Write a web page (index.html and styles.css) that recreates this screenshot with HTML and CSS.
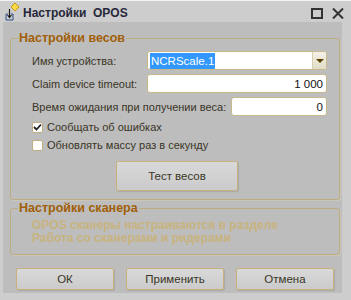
FILE: index.html
```html
<!DOCTYPE html>
<html>
<head>
<meta charset="utf-8">
<link rel="stylesheet" href="styles.css">
</head>
<body>
<div class="window">
  <div class="titlebar">
    <svg class="appicon" width="20" height="20" viewBox="0 0 20 20">
      <path d="M12 2 L16 6 L12 10 L8 6 Z" fill="#ffd84a" stroke="#c89a10" stroke-width="1"/>
      <path d="M3 13 H5 M8 13 H10 M3 13 V19 H10 V13" fill="none" stroke="#2c4f8a" stroke-width="1"/>
      <path d="M6.5 8 V16 M4.5 14 L6.5 16.5 L8.5 14" fill="none" stroke="#1b1b1b" stroke-width="1.2"/>
    </svg>
    <span class="title">Настройки&nbsp; OPOS</span>
    <span class="winbtns">
      <svg width="12" height="11" viewBox="0 0 12 11"><rect x="1" y="1" width="10" height="9" fill="none" stroke="#333" stroke-width="2"/></svg>
      <svg width="12" height="11" viewBox="0 0 12 11"><path d="M1 0.5 L11 10.5 M11 0.5 L1 10.5" stroke="#333" stroke-width="2"/></svg>
    </span>
  </div>
  <div class="content">
    <fieldset class="group scales">
      <legend>Настройки весов</legend>
      <div class="row">
        <label class="lbl">Имя устройства:</label>
        <div class="field combo wide"><span class="sel">NCRScale.1</span><span class="dd"><i></i></span></div>
      </div>
      <div class="row">
        <label class="lbl">Claim device timeout:</label>
        <div class="field wide num">1 000</div>
      </div>
      <div class="row">
        <label class="lbl">Время ожидания при получении веса:</label>
        <div class="field short num">0</div>
      </div>
      <div class="check first"><span class="box"><svg width="9" height="8" viewBox="0 0 9 8"><path d="M1 4 L3.5 6.5 L8 1.5" fill="none" stroke="#222" stroke-width="1.8"/></svg></span>Сообщать об ошибках</div>
      <div class="check"><span class="box"></span>Обновлять массу раз в секунду</div>
      <div class="testrow"><button class="btn test">Тест весов</button></div>
    </fieldset>
    <fieldset class="group scanner">
      <legend>Настройки сканера</legend>
      <p class="note">OPOS сканеры настраиваются в разделе<br>Работа со сканерами и ридерами</p>
    </fieldset>
    <div class="buttons">
      <button class="btn">ОК</button>
      <button class="btn">Применить</button>
      <button class="btn">Отмена</button>
    </div>
  </div>
</div>
</body>
</html>
```
FILE: styles.css
```css
* { box-sizing: border-box; }
html, body { margin: 0; padding: 0; }
body {
  width: 351px;
  height: 300px;
  background: #cdcdcd;
  font-family: "Liberation Sans", Arial, sans-serif;
  font-size: 11px;
  color: #3a3526;
  overflow: hidden;
}
.window {
  width: 351px;
  height: 300px;
  background: #cdcdcd;
  border-top: 1px solid #f2f2f2;
  display: flex;
  flex-direction: column;
}
.titlebar {
  height: 21px;
  display: flex;
  align-items: center;
  padding-left: 3px;
  padding-right: 7px;
}
.appicon { flex: none; margin-top: -2px; }
.title {
  font-weight: bold;
  font-size: 12px;
  color: #26283a;
  margin-left: 0px;
  margin-top: 3px;
}
.winbtns {
  margin-left: auto;
  display: flex;
  gap: 9px;
  margin-top: 4px;
}
.content {
  margin: 0 9px 0 3px;
  height: 271px;
  background: #bdbdbd;
  padding: 9px 2px 0 7px;
}
.group {
  margin: 0;
  border: 1px solid #bcae80;
  border-radius: 3px;
  box-shadow: 1px 1px 0 #cbc7b8;
  min-width: 0;
}
.group legend {
  font-size: 12.5px;
  font-weight: bold;
  color: #a15f07;
  line-height: 14px;
  padding: 0 1px;
  margin-left: -14px;
}
.scales {
  padding: 6px 12px 8px 21px;
}
.row {
  display: flex;
  align-items: center;
  height: 19px;
  margin-bottom: 4px;
}
.lbl { flex: none; }
.field {
  flex: none;
  margin-left: auto;
  height: 19px;
  background: #fff;
  border: 1px solid #c9b98a;
  border-radius: 3px;
  display: flex;
  align-items: center;
  color: #111;
  font-size: 11.5px;
}
.wide { width: 180px; }
.short { width: 96px; }
.num { justify-content: flex-end; padding-right: 3px; }
.combo { padding-left: 2px; }
.sel {
  background: #3398fe;
  color: #fff;
  padding: 1px 1px;
  line-height: 14px;
}
.dd {
  margin-left: auto;
  width: 14px;
  height: 17px;
  border-left: 1px solid #d7cfae;
  background: linear-gradient(#f3f1e6, #e0dcc8);
  border-radius: 0 2px 2px 0;
  display: flex;
  align-items: center;
  justify-content: center;
}
.dd i {
  width: 0; height: 0;
  border-left: 4px solid transparent;
  border-right: 4px solid transparent;
  border-top: 4px solid #5a3f00;
}
.check {
  display: flex;
  align-items: center;
  height: 18px;
}
.check.first { margin-top: -2px; }
.box {
  width: 11px;
  height: 11px;
  background: #fff;
  border: 1px solid #bcae80;
  border-radius: 2px;
  margin-right: 4px;
  display: flex;
  align-items: center;
  justify-content: center;
}
.testrow {
  margin-top: 7px;
  padding-left: 84px;
}
.btn {
  font-family: "Liberation Sans", Arial, sans-serif;
  font-size: 11.5px;
  color: #3a3526;
  background: linear-gradient(#d9d9d9, #cbcbcb);
  border: 1px solid #c6b27a;
  border-radius: 2px;
  box-shadow: 1px 1px 1px #a9a9a9;
  padding: 0;
}
.test { width: 122px; height: 30px; }
.scanner {
  margin-top: 1px;
  padding: 4px 12px 9px 21px;
}
.note {
  margin: 0;
  font-weight: bold;
  font-size: 12px;
  color: #c8b37e;
  line-height: 13px;
}
.buttons {
  display: flex;
  gap: 12px;
  margin-top: 13px;
  padding-left: 6px;
}
.buttons .btn { width: 98px; height: 22px; }
```
